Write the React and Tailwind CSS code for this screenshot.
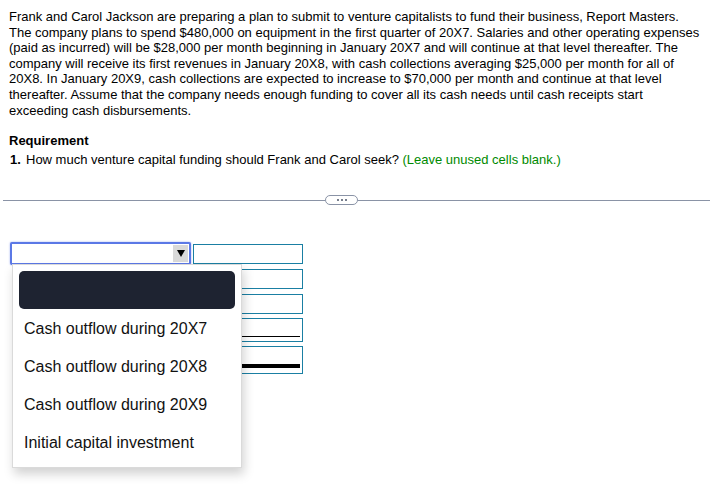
import React from 'react';

const options = [
  'Cash outflow during 20X7',
  'Cash outflow during 20X8',
  'Cash outflow during 20X9',
  'Initial capital investment',
];

const Box = ({ className = '', line }) => (
  <div className={`relative w-[110px] border border-[#1a7fa3] bg-white ${className}`}>
    {line === 'single' && <div className="absolute left-[2px] right-[2px] bottom-[4px] h-[1px] bg-black" />}
    {line === 'double' && <div className="absolute left-[2px] right-[2px] bottom-[5px] h-[4px] bg-black" />}
  </div>
);

const App = () => {
  return (
    <div className="min-h-[502px] w-[713px] bg-white text-[13px] leading-[15.6px] text-black font-['Liberation_Sans',Arial,sans-serif]">
      <div className="px-[9px] pt-[9px]">
        <p>
          Frank and Carol Jackson are preparing a plan to submit to venture capitalists to fund their business, Report Masters.
          The company plans to spend $480,000 on equipment in the first quarter of 20X7. Salaries and other operating expenses
          (paid as incurred) will be $28,000 per month beginning in January 20X7 and will continue at that level thereafter. The
          company will receive its first revenues in January 20X8, with cash collections averaging $25,000 per month for all of
          20X8. In January 20X9, cash collections are expected to increase to $70,000 per month and continue at that level
          thereafter. Assume that the company needs enough funding to cover all its cash needs until cash receipts start
          exceeding cash disbursements.
        </p>
        <p className="mt-[15px] font-bold">Requirement</p>
        <p className="mt-[3px] flex">
          <span className="w-[17px] pl-[1px] font-bold">1.</span>
          <span>
            How much venture capital funding should Frank and Carol seek?{' '}
            <span className="text-[#008a00]">(Leave unused cells blank.)</span>
          </span>
        </p>
      </div>

      <div className="mt-[28px] flex items-center px-[3px] h-[10px]">
        <div className="w-[322px] h-[1px] bg-[#8a93a6]" />
        <div className="flex h-[10px] w-[33px] items-center justify-center gap-[2px] rounded-full border border-[#8a93a6] bg-white">
          <span className="h-[2px] w-[2px] rounded-full bg-[#4b5568]" />
          <span className="h-[2px] w-[2px] rounded-full bg-[#4b5568]" />
          <span className="h-[2px] w-[2px] rounded-full bg-[#4b5568]" />
        </div>
        <div className="flex-1 h-[1px] bg-[#8a93a6]" />
      </div>

      <div className="mt-[37px] flex pl-[10px]">
        <div className="relative w-[181px]">
          <div className="flex h-[23px] items-center justify-end rounded-[2px] border-2 border-[#5b78e6] bg-white pr-[1px] shadow-[0_0_2px_rgba(80,110,230,0.6)]">
            <div className="flex h-[17px] w-[15px] items-center justify-center bg-[#d9d9d9]">
              <svg width="8" height="7" viewBox="0 0 8 7">
                <path d="M0 0H8L4 7Z" fill="#000" />
              </svg>
            </div>
          </div>
          <div className="absolute left-[2px] top-[22px] z-10 w-[230px] border border-[#dadada] bg-white px-[6px] pt-[6px] pb-[6px] shadow-[2px_6px_10px_rgba(0,0,0,0.18)]">
            <div className="h-[38px] rounded-[5px] bg-[#1e2331]" />
            {options.map((o) => (
              <div key={o} className="flex h-[38px] items-center px-[5px] text-[16px] text-[#111]">
                {o}
              </div>
            ))}
          </div>
        </div>
        <div className="ml-[2px] mt-[2px] flex flex-col">
          <Box className="h-[20px]" />
          <Box className="mt-[5px] h-[20px]" />
          <Box className="mt-[5px] h-[20px]" />
          <Box className="mt-[4px] h-[24px]" line="single" />
          <Box className="mt-[4px] h-[28px]" line="double" />
        </div>
      </div>
    </div>
  );
};

export default App;
